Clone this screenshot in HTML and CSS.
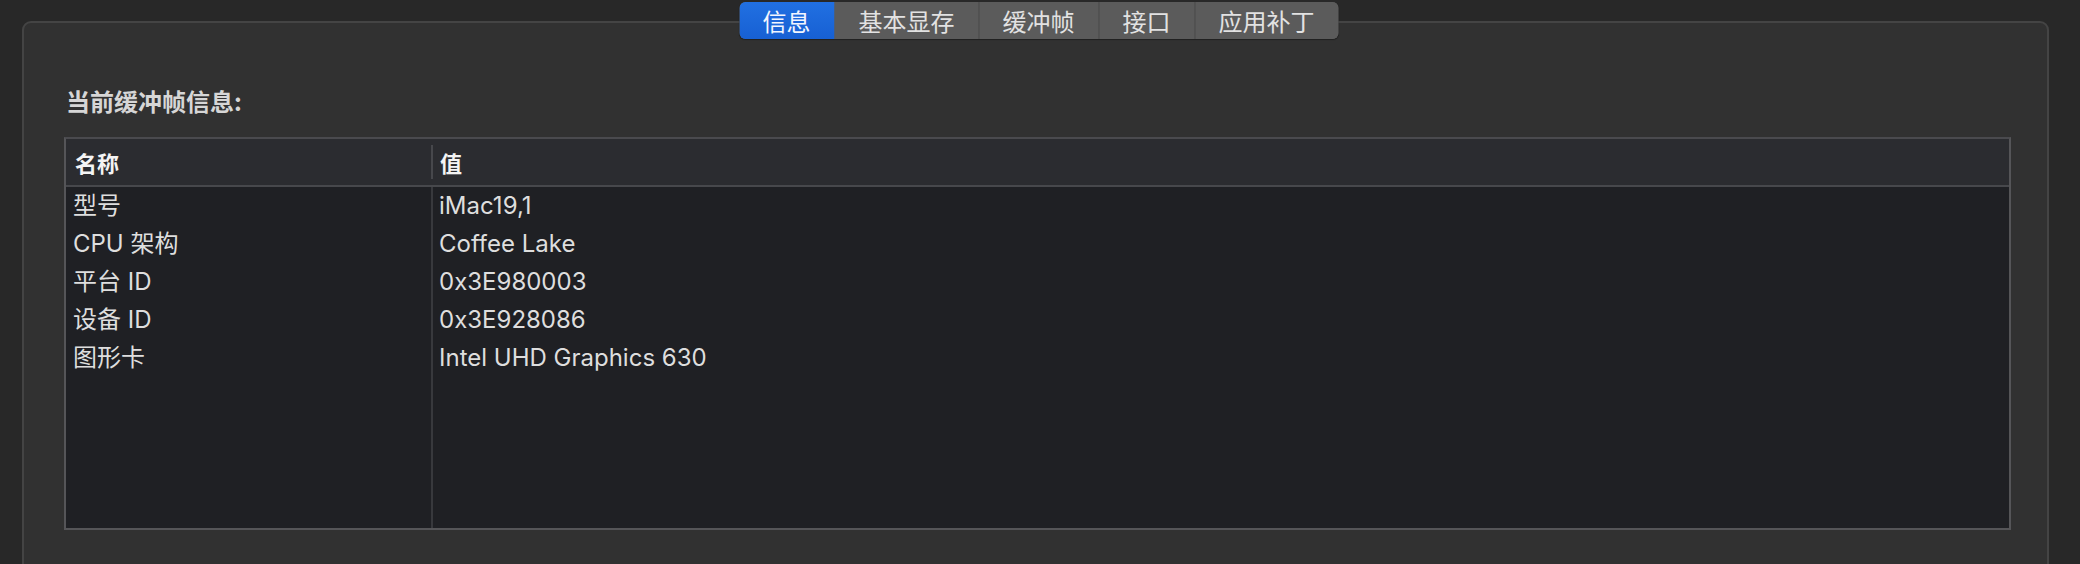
FILE: index.html
```html
<!DOCTYPE html>
<html lang="zh-CN">
<head>
<meta charset="utf-8">
<title>缓冲帧信息</title>
<link rel="stylesheet" href="styles.css">
</head>
<body>
<div class="page">
  <div class="group">
    <div class="tabs">
      <div class="tab active">信息</div>
      <div class="tab">基本显存</div>
      <div class="tab">缓冲帧</div>
      <div class="tab">接口</div>
      <div class="tab">应用补丁</div>
    </div>
    <div class="heading">当前缓冲帧信息:</div>
    <div class="table">
      <div class="thead">
        <div class="th th-name">名称</div>
        <div class="th th-value">值</div>
      </div>
      <div class="tbody">
        <div class="col col-name">
          <div class="cell">型号</div>
          <div class="cell">CPU 架构</div>
          <div class="cell">平台 ID</div>
          <div class="cell">设备 ID</div>
          <div class="cell">图形卡</div>
        </div>
        <div class="col col-value">
          <div class="cell">iMac19,1</div>
          <div class="cell">Coffee Lake</div>
          <div class="cell">0x3E980003</div>
          <div class="cell">0x3E928086</div>
          <div class="cell">Intel UHD Graphics 630</div>
        </div>
      </div>
    </div>
  </div>
</div>
</body>
</html>
```

FILE: styles.css
```css
* { box-sizing: border-box; }
html, body {
  margin: 0;
  padding: 0;
  background: #282828;
  height: 564px;
  overflow: hidden;
}
body {
  font-family: Inter, "Noto Sans CJK SC", sans-serif;
  color: #dcdcdc;
}
.page {
  padding: 21px 31px 0 22px;
}
.group {
  position: relative;
  height: 700px;
  background: #313131;
  border: 2px solid #444444;
  border-radius: 9px;
  padding: 62px 36px 0 40px;
}
.tabs {
  position: absolute;
  top: -21px;
  left: 50%;
  transform: translateX(-49.5%);
  display: flex;
  height: 37px;
  border-radius: 6px;
  overflow: hidden;
  background: #5b5b5b;
  box-shadow: 0 1px 1px rgba(0,0,0,0.35);
}
.tab {
  padding: 0 23.5px;
  height: 37px;
  line-height: 37px;
  font-family: "Noto Sans CJK SC", sans-serif;
  font-size: 24px;
  color: #e2e2e2;
  background: #5b5b5b;
  border-left: 1px solid #4a4a4a;
}
.tab:first-child { border-left: none; }
.tab.active {
  background: linear-gradient(#2170e2, #1760d3);
  color: #f2f6ff;
}
.tab.active + .tab { border-left: none; padding-left: 24.5px; }
.heading {
  font-family: "Noto Sans CJK SC", sans-serif;
  font-weight: bold;
  font-size: 24px;
  line-height: 32px;
  color: #d6d6d6;
  padding-left: 2px;
  margin-bottom: 20px;
}
.table {
  height: 393px;
  border: 2px solid #555558;
  border-top-color: #4a4a4e;
  display: flex;
  flex-direction: column;
  background: #1f2024;
}
.thead {
  display: flex;
  height: 48px;
  background: #2b2c30;
  border-bottom: 2px solid #47484c;
  align-items: center;
}
.th {
  font-family: "Noto Sans CJK SC", sans-serif;
  font-weight: bold;
  font-size: 22px;
  color: #f4f4f4;
  line-height: 34px;
}
.th-name {
  width: 365px;
  padding-left: 9px;
}
.th-value {
  border-left: 2px solid #47484c;
  padding-left: 7px;
}
.tbody {
  flex: 1;
  display: flex;
}
.col-name {
  width: 367px;
  border-right: 2px solid #38393d;
}
.col-value {
  flex: 1;
}
.cell {
  height: 38px;
  line-height: 38px;
  font-size: 24px;
  color: #dedede;
  white-space: nowrap;
}
.col-name .cell { padding-left: 7px; }
.col-value .cell { padding-left: 6px; }
```
